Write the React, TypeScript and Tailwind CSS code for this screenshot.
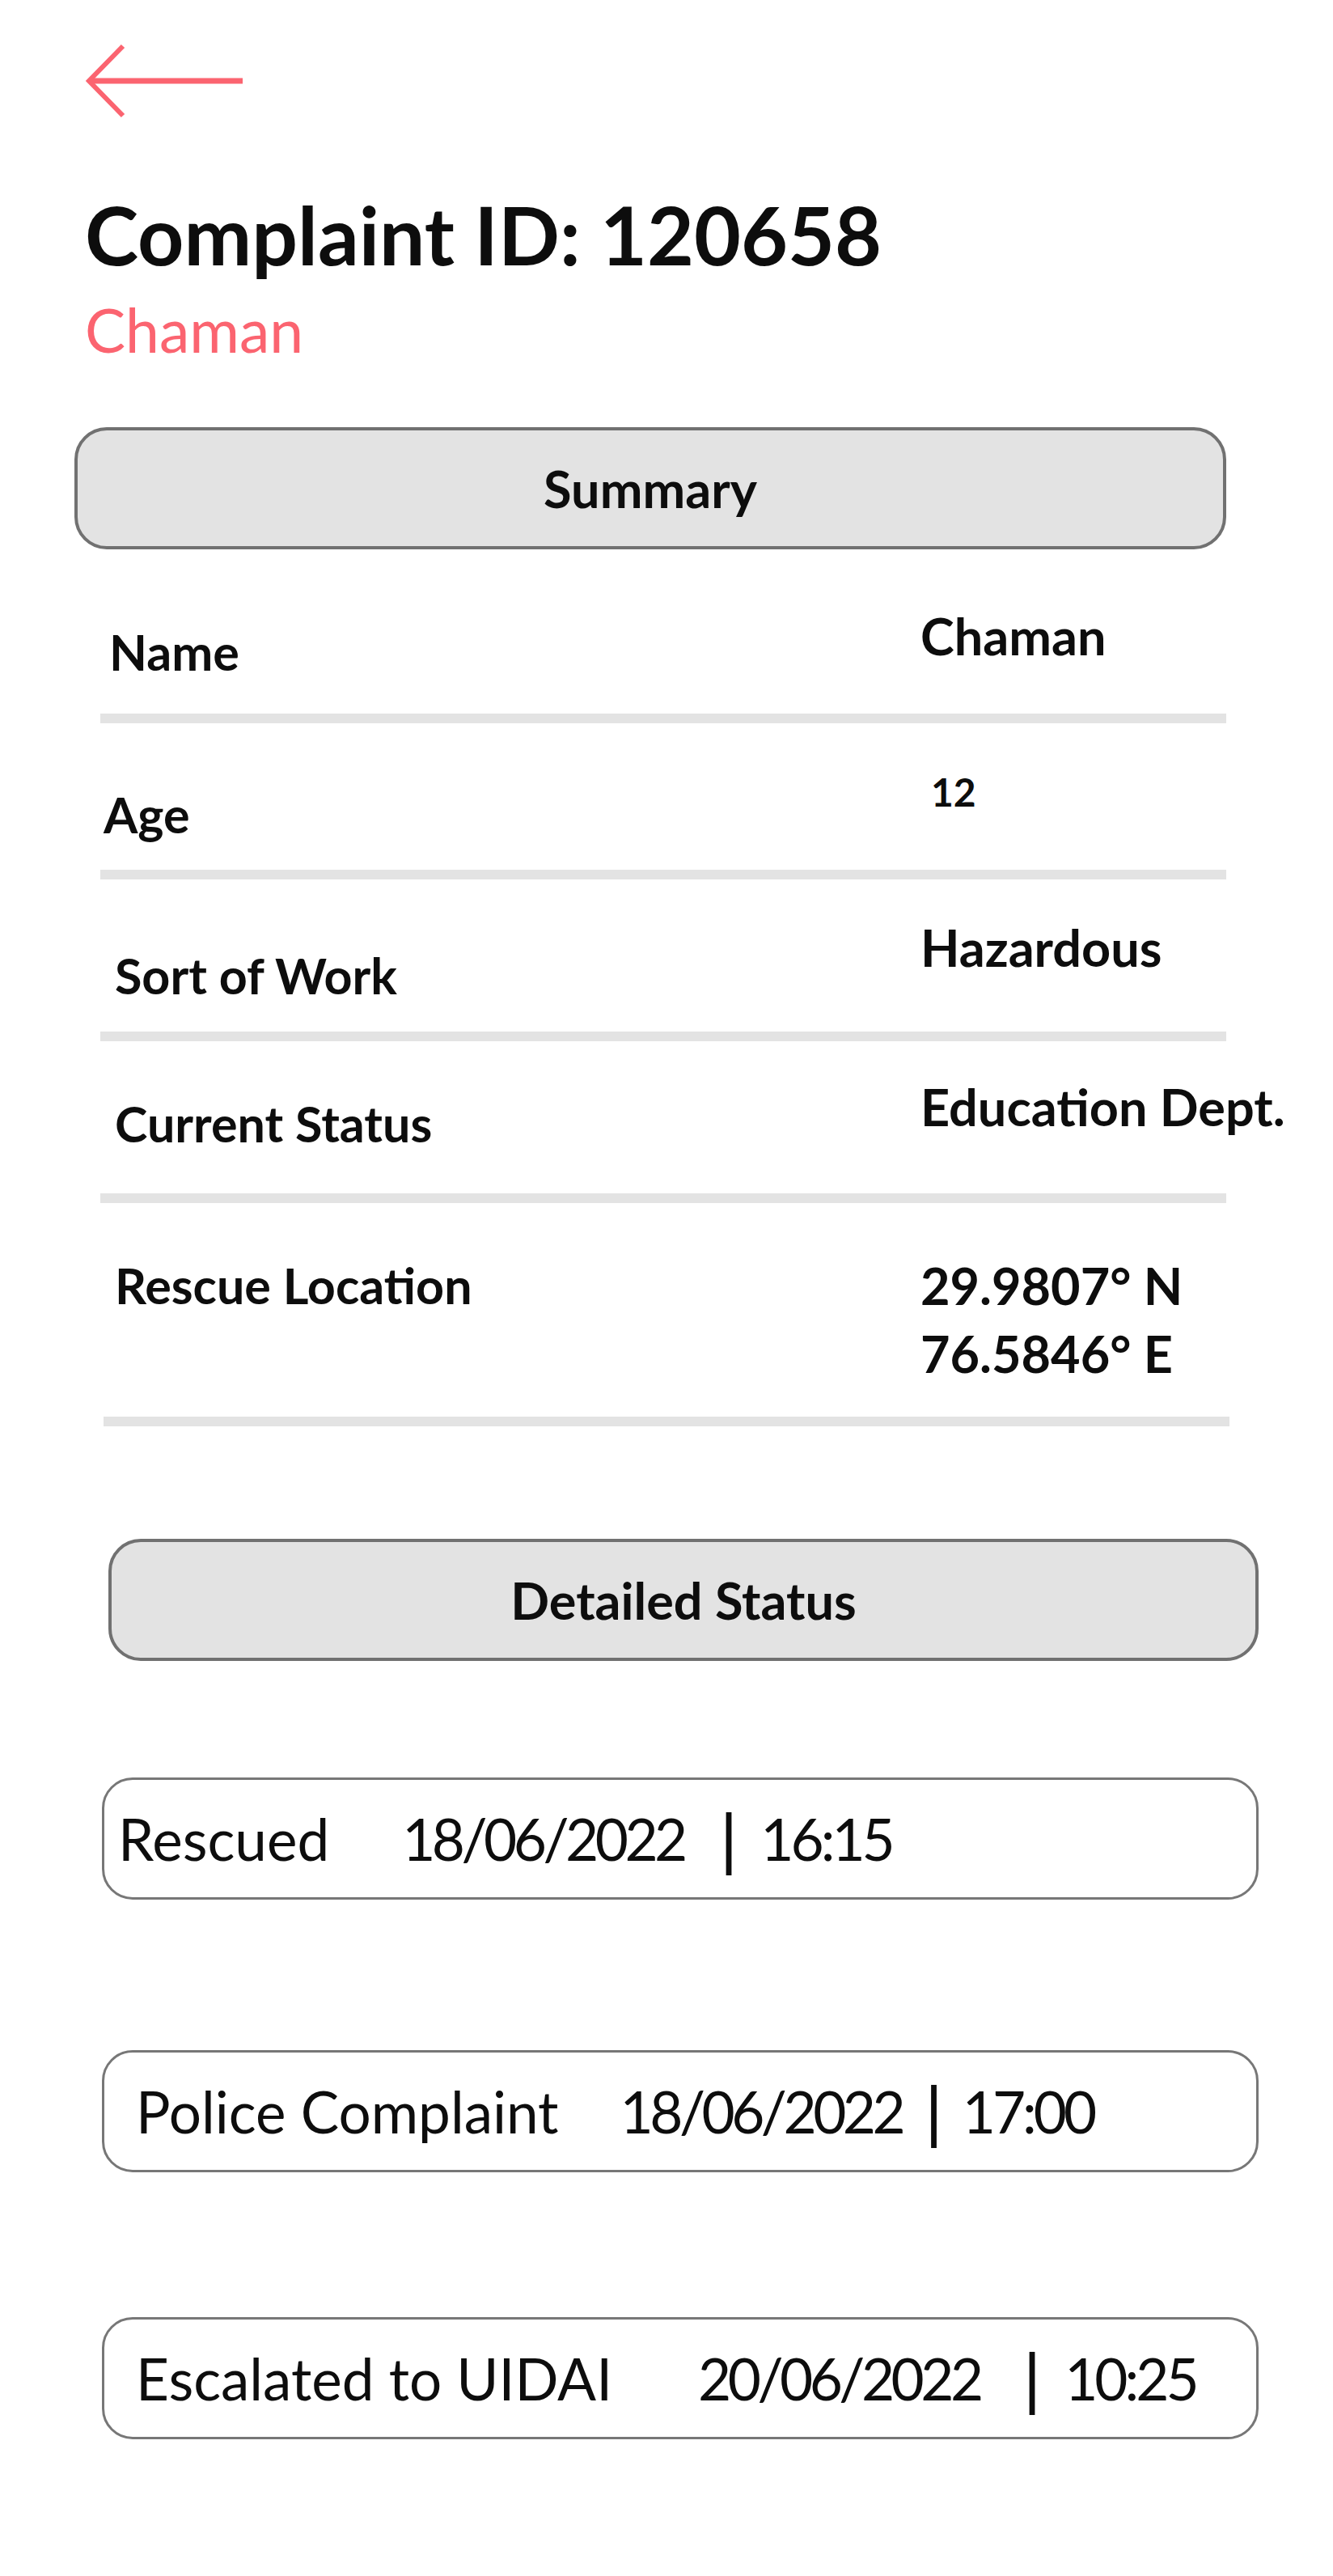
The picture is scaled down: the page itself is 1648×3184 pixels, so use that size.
import React from "react";

function BackArrow() {
  return (
    <svg width="200" height="92" viewBox="0 0 200 92" fill="none">
      <line x1="6" y1="46" x2="196" y2="46" stroke="#fb6470" strokeWidth="7" />
      <polyline points="48,3 6,46 48,89" stroke="#fb6470" strokeWidth="6" fill="none" strokeLinejoin="miter" />
    </svg>
  );
}

function StatusRow({
  label,
  date,
  time,
  pl,
  mt,
  dm,
  bm,
  tm,
}: {
  label: string;
  date: string;
  time: string;
  pl: string;
  mt: string;
  dm: string;
  bm: string;
  tm: string;
}) {
  return (
    <div className={`${mt} ml-[126px] w-[1430px] h-[151px] rounded-[38px] border-[3px] border-[#777777] flex items-center ${pl} text-[71px] leading-none whitespace-nowrap`}>
      <span>{label}</span>
      <span className={`${dm} tracking-[-4.5px]`}>{date}</span>
      <span className={`${bm} font-bold scale-y-[1.15]`}>|</span>
      <span className={`${tm} tracking-[-4px]`}>{time}</span>
    </div>
  );
}

export default function App() {
  return (
    <div className="w-[1648px] min-h-[3184px] bg-white font-['Lato',sans-serif] text-[#0d0d0d]">
      <div className="pt-[54px] pl-[104px]">
        <BackArrow />
      </div>

      <h1 className="mt-[93px] pl-[105px] text-[100px] font-bold leading-none">Complaint ID: 120658</h1>
      <div className="mt-[31px] pl-[105px] text-[75px] leading-none text-[#fb6470]">Chaman</div>

      <div className="mt-[83px] ml-[92px] w-[1424px] h-[151px] rounded-[40px] border-4 border-[#717171] bg-[#e3e3e3] flex items-center justify-center">
        <span className="text-[63px] font-bold leading-none">Summary</span>
      </div>

      <div className="ml-[124px] w-[1392px]">
        <div className="h-[215px] border-b-[12px] border-[#e3e3e3] flex items-start">
          <div className="w-[1014px] shrink-0 pl-[11px] pt-[96px] text-[61px] font-bold leading-none">Name</div>
          <div className="pt-[75px] text-[63px] font-bold leading-none">Chaman</div>
        </div>
        <div className="h-[193px] border-b-[12px] border-[#e3e3e3] flex items-start">
          <div className="w-[1014px] shrink-0 pl-[4px] pt-[82px] text-[61px] font-bold leading-none">Age</div>
          <div className="pl-[13px] pt-[61px] text-[48px] font-bold leading-none">12</div>
        </div>
        <div className="h-[200px] border-b-[12px] border-[#e3e3e3] flex items-start">
          <div className="w-[1014px] shrink-0 pl-[18px] pt-[88px] text-[61px] font-bold leading-none">Sort of Work</div>
          <div className="pt-[52px] text-[63px] font-bold leading-none">Hazardous</div>
        </div>
        <div className="h-[200px] border-b-[12px] border-[#e3e3e3] flex items-start">
          <div className="w-[1014px] shrink-0 pl-[18px] pt-[71px] text-[61px] font-bold leading-none">Current Status</div>
          <div className="pt-[49px] text-[63px] font-bold leading-none whitespace-nowrap">Education Dept.</div>
        </div>
      </div>
      <div className="ml-[128px] w-[1392px]">
        <div className="h-[276px] border-b-[12px] border-[#e3e3e3] flex items-start">
          <div className="w-[1010px] shrink-0 pl-[14px] pt-[71px] text-[61px] font-bold leading-none">Rescue Location</div>
          <div className="pt-[70px] text-[63px] font-bold leading-none whitespace-nowrap">
            <div>29.9807° N</div>
            <div className="mt-[21px]">76.5846° E</div>
          </div>
        </div>
      </div>

      <div className="mt-[139px] ml-[134px] w-[1422px] h-[151px] rounded-[40px] border-4 border-[#717171] bg-[#e3e3e3] flex items-center justify-center">
        <span className="text-[63px] font-bold leading-none">Detailed Status</span>
      </div>

      <StatusRow mt="mt-[144px]" pl="pl-[17px]" label="Rescued" date="18/06/2022" time="16:15" dm="ml-[90px]" bm="ml-[46px]" tm="ml-[30px]" />
      <StatusRow mt="mt-[186px]" pl="pl-[39px]" label="Police Complaint" date="18/06/2022" time="17:00" dm="ml-[76px]" bm="ml-[30px]" tm="ml-[26px]" />
      <StatusRow mt="mt-[179px]" pl="pl-[39px]" label="Escalated to UIDAI" date="20/06/2022" time="10:25" dm="ml-[106px]" bm="ml-[55px]" tm="ml-[31px]" />
    </div>
  );
}
